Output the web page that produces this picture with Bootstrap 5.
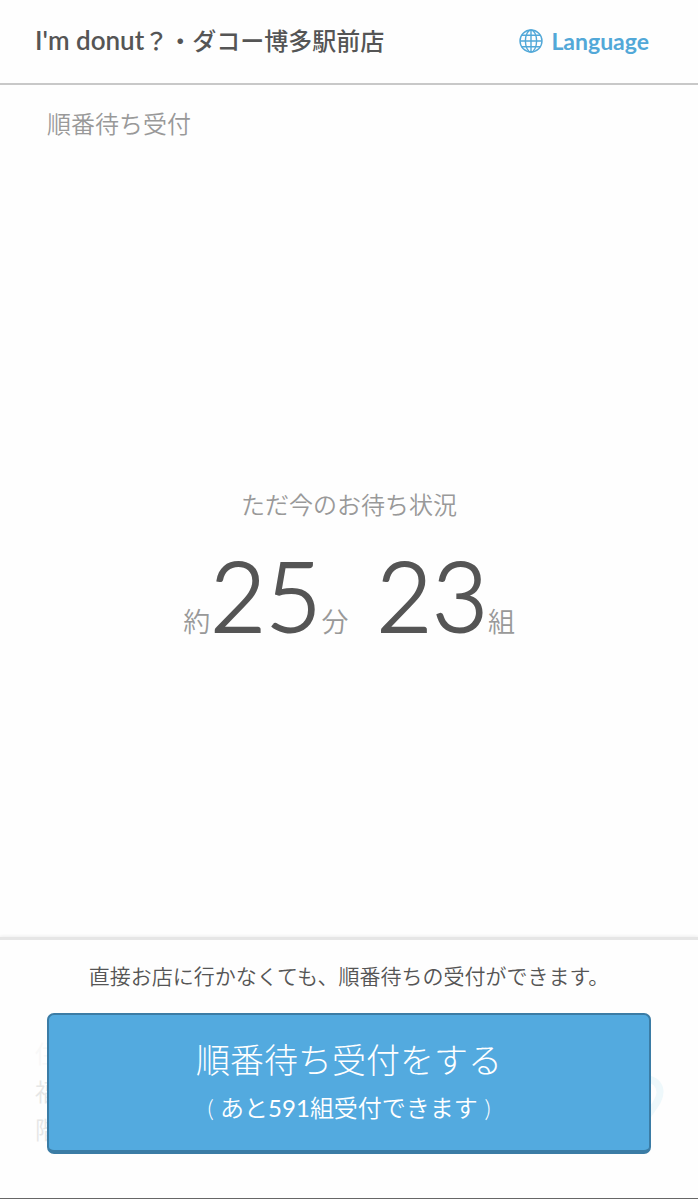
<!DOCTYPE html>
<html lang="ja">
<head>
<meta charset="utf-8">
<meta name="viewport" content="width=device-width, initial-scale=1">
<title>I'm donut？・ダコー博多駅前店</title>
<link href="https://cdn.jsdelivr.net/npm/bootstrap@5.3.0/dist/css/bootstrap.min.css" rel="stylesheet">
<style>
body{font-family:Lato,"Noto Sans CJK JP",sans-serif;font-weight:350;color:#555;background:#fefefe}
.site-header{min-height:85px;padding:0 49px 2px 35px;border-bottom:2px solid #c8c8c8}
.shop-name{font-size:24px;line-height:36px;font-weight:500;color:#555}
.shop-latin{font-size:26px;font-weight:600}
.lang-link{font-size:23px;line-height:32px;font-weight:700;color:#52a8d8;gap:8px}
.page-title{font-size:24px;line-height:36px;font-weight:350;color:#999;padding:21px 47px 0}
.wait-status{padding-top:90px}
.wait-label{font-size:24px;line-height:36px;color:#999;margin-bottom:12px}
.wait-row{color:#999;font-size:27px;line-height:120px;gap:28px}
.wait-number{font-size:96px;color:#555;font-weight:300;-webkit-text-stroke:2px #555}
.reserve-bar{border-top:3px solid #e6e6e6;box-shadow:0 -1px 3px #eee;padding:18px 47px 44px;border-bottom:1px solid #666}
.reserve-note{font-size:21px;line-height:36px;margin-bottom:19px}
.btn-reserve{position:relative;background:#53aadf;color:#fff;border:2px solid #3b7ca5;border-bottom-width:4px;border-radius:7px;padding:19px 8px 20px;font-weight:300}
.btn-reserve:hover{background:#479dd2;color:#fff;border-color:#3b7ca5}
.reserve-title{font-size:34px;line-height:52px}
.reserve-sub{font-size:24px;line-height:44px;font-weight:350}
.reserve-count{font-weight:400}
.shop-address{position:absolute;left:-12px;top:22px;font-size:24px;line-height:38px;color:#e6e6e6}
.shop-address-label{color:#f8f8f8}
.shop-pin{position:absolute;right:-14px;top:62px}
</style>
</head>
<body>
<div class="d-flex flex-column min-vh-100">
  <header class="site-header d-flex align-items-center justify-content-between">
    <h1 class="shop-name mb-0"><span class="shop-latin">I'm donut</span>？・ダコー博多駅前店</h1>
    <a href="#" class="lang-link d-flex align-items-center text-decoration-none">
      <svg width="24" height="24" viewBox="0 0 24 24" fill="none" stroke="currentColor" stroke-width="1.4" aria-hidden="true"><circle cx="12" cy="12" r="11"/><ellipse cx="12" cy="12" rx="5.6" ry="11"/><path d="M12 1v22M1 12h22M3 6.2h18M3 17.8h18"/></svg>
      <span>Language</span>
    </a>
  </header>
  <main class="flex-grow-1 d-flex flex-column">
    <h2 class="page-title mb-0">順番待ち受付</h2>
    <section class="wait-status my-auto text-center">
      <p class="wait-label">ただ今のお待ち状況</p>
      <div class="wait-row d-flex justify-content-center">
        <div>約<span class="wait-number">25</span>分</div>
        <div><span class="wait-number">23</span>組</div>
      </div>
    </section>
  </main>
  <footer class="reserve-bar text-center">
    <p class="reserve-note">直接お店に行かなくても、順番待ちの受付ができます。</p>
    <div class="position-relative">
      <div class="shop-address" aria-hidden="true"><div class="shop-address-label">住</div><div>福</div><div>階</div></div>
      <svg class="shop-pin" width="36" height="48" viewBox="0 0 36 48" fill="none" stroke="#eef8fb" stroke-width="7" aria-hidden="true"><path d="M18 42C12 32 5 26 5 17a13 13 0 0 1 26 0c0 9-7 15-13 25z"/></svg>
      <button type="button" class="btn btn-reserve w-100">
        <span class="reserve-title d-block">順番待ち受付をする</span>
        <span class="reserve-sub d-block">( あと<span class="reserve-count">591</span>組受付できます )</span>
      </button>
    </div>
  </footer>
</div>
<script src="https://cdn.jsdelivr.net/npm/bootstrap@5.3.0/dist/js/bootstrap.bundle.min.js"></script>
</body>
</html>
